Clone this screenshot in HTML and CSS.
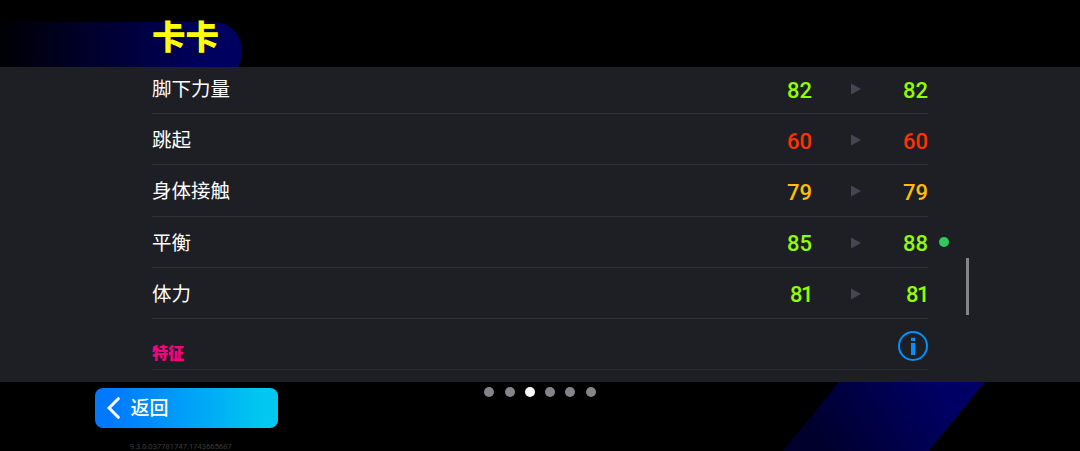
FILE: index.html
```
<!DOCTYPE html>
<html lang="zh-CN">
<head>
    <meta charset="UTF-8">
    <meta name="viewport" content="width=device-width, initial-scale=1.0">
    <title>卡卡</title>
    <link rel="stylesheet" href="styles.css">
</head>
<body>

<header class="header">
    <h1>卡卡</h1>
</header>

<main class="panel">
    <div class="stats">
        <div class="row">
            <span class="name">脚下力量</span>
            <span class="value green">82</span>
            <svg class="arrow" viewBox="0 0 10 12"><path d="M0 0.5L10 6L0 11.5Z"/></svg>
            <span class="value green">82</span>
        </div>
        <div class="row">
            <span class="name">跳起</span>
            <span class="value red">60</span>
            <svg class="arrow" viewBox="0 0 10 12"><path d="M0 0.5L10 6L0 11.5Z"/></svg>
            <span class="value red">60</span>
        </div>
        <div class="row">
            <span class="name">身体接触</span>
            <span class="value amber">79</span>
            <svg class="arrow" viewBox="0 0 10 12"><path d="M0 0.5L10 6L0 11.5Z"/></svg>
            <span class="value amber">79</span>
        </div>
        <div class="row">
            <span class="name">平衡</span>
            <span class="value green">85</span>
            <svg class="arrow" viewBox="0 0 10 12"><path d="M0 0.5L10 6L0 11.5Z"/></svg>
            <span class="value green boosted">88</span>
        </div>
        <div class="row">
            <span class="name">体力</span>
            <span class="value green narrow">81</span>
            <svg class="arrow" viewBox="0 0 10 12"><path d="M0 0.5L10 6L0 11.5Z"/></svg>
            <span class="value green narrow">81</span>
        </div>
        <div class="row section">
            <h2>特征</h2>
            <svg class="info" viewBox="0 0 30 30">
                <circle cx="15" cy="15" r="14"/>
                <path d="M13 6.7h4.2v3.4H13zM13 12h4.2v12H13z"/>
            </svg>
        </div>
    </div>
    <div class="scrollbar"></div>
</main>

<footer class="footer">
    <div class="left">
        <button class="back">
            <svg viewBox="0 0 13 22"><path d="M11.3 1.7L2 11l9.3 9.3"/></svg>
            <span>返回</span>
        </button>
        <div class="version">9.3.0.037781747.1743665687</div>
    </div>
    <div class="dots">
        <i></i><i></i><i class="active"></i><i></i><i></i><i></i>
    </div>
    <svg class="stripe" viewBox="0 0 202 69">
        <defs>
            <linearGradient id="stripeFill" gradientUnits="userSpaceOnUse" x1="40" y1="70" x2="150" y2="0">
                <stop offset="0" stop-color="#00002c"/>
                <stop offset="1" stop-color="#000064"/>
            </linearGradient>
        </defs>
        <path d="M56 0H202L145.500 69H0Z" fill="url(#stripeFill)"/>
    </svg>
</footer>

</body>
</html>
```
FILE: styles.css
```
* {
    box-sizing: border-box;
}
body {
    margin: 0;
    height: 451px;
    display: flex;
    flex-direction: column;
    overflow: hidden;
    background: #000;
    color: #fff;
    font-family: Roboto, 'Noto Sans CJK SC', sans-serif;
}
.header {
    height: 67px;
    flex: none;
    padding-left: 152px;
    position: relative;
    overflow: hidden;
}
.header::before {
    content: '';
    position: absolute;
    left: 0;
    top: 22px;
    width: 242px;
    height: 58px;
    border-radius: 0 28px 28px 0;
    background: linear-gradient(90deg, #000004 0%, #00001c 22%, #00005c 82%, #000062 100%);
}
h1 {
    position: relative;
    margin: 0;
    font-size: 33.5px;
    line-height: 75px;
    font-weight: 900;
    color: #ff0;
}
.panel {
    height: 315px;
    flex: none;
    display: flex;
    padding-left: 152px;
    background: #1e1f25;
}
.stats {
    width: 776px;
    margin-top: -4px;
}
.row {
    display: flex;
    align-items: center;
    height: 51.2px;
    border-bottom: 1px solid #303137;
}
.name {
    flex: 1;
    font-size: 19.5px;
    line-height: 28px;
    margin-top: 4px;
}
.value {
    width: 60px;
    padding-top: 5px;
    text-align: right;
    font-size: 22px;
    line-height: 26px;
    font-weight: 500;
}
.green {
    color: #92fc00;
}
.red {
    color: #ff3200;
}
.amber {
    color: #ffbe00;
}
/* the 1 sits closer to the digit before it */
.narrow {
    letter-spacing: -1.5px;
}
.boosted {
    position: relative;
}
.boosted::after {
    content: '';
    position: absolute;
    left: 71px;
    top: 11px;
    width: 10px;
    height: 10px;
    border-radius: 50%;
    background: #31c95d;
}
.arrow {
    width: 10px;
    height: 12px;
    margin: 2px 7px 0 39px;
    fill: #45464f;
}
.section {
    justify-content: space-between;
    border-color: #292a30;
}
h2 {
    margin: 19px 0 0;
    font-size: 16px;
    line-height: 24px;
    font-weight: 900;
    color: #ff0084;
}
.info {
    width: 30px;
    height: 30px;
    margin-top: 4px;
    fill: #0091ff;
}
.info circle {
    fill: none;
    stroke: #0091ff;
    stroke-width: 2;
}
.scrollbar {
    width: 3px;
    height: 57px;
    margin: 191px 0 0 38px;
    background: #858589;
}
.footer {
    flex: 1;
    position: relative;
    display: grid;
    grid-template-columns: 380px 320px 380px;
}
.left {
    padding: 5.5px 0 0 94.5px;
}
.back {
    display: flex;
    align-items: center;
    gap: 11px;
    width: 183.5px;
    height: 40.5px;
    padding: 0 0 0 12px;
    border: none;
    border-radius: 8px;
    background: linear-gradient(90deg, #0078ff 8%, #00c8f0 92%);
    color: #fff;
    font-family: inherit;
    font-size: 19px;
    font-weight: 500;
}
.back span {
    margin-bottom: 3px;
}
.back svg {
    width: 13px;
    height: 22px;
    fill: none;
    stroke: #fff;
    stroke-width: 3;
    stroke-linecap: round;
}
.version {
    margin: 14px 0 0 35px;
    font-size: 8px;
    line-height: 10px;
    letter-spacing: -0.2px;
    color: #3a3a3a;
}
.dots {
    display: flex;
    justify-content: center;
    gap: 10.3px;
    padding-top: 5px;
}
.dots i {
    width: 10px;
    height: 10px;
    border-radius: 50%;
    background: #858589;
}
.dots .active {
    background: #fff;
}
.stripe {
    position: absolute;
    left: 783px;
    top: 0;
    width: 202px;
    height: 69px;
}
```
